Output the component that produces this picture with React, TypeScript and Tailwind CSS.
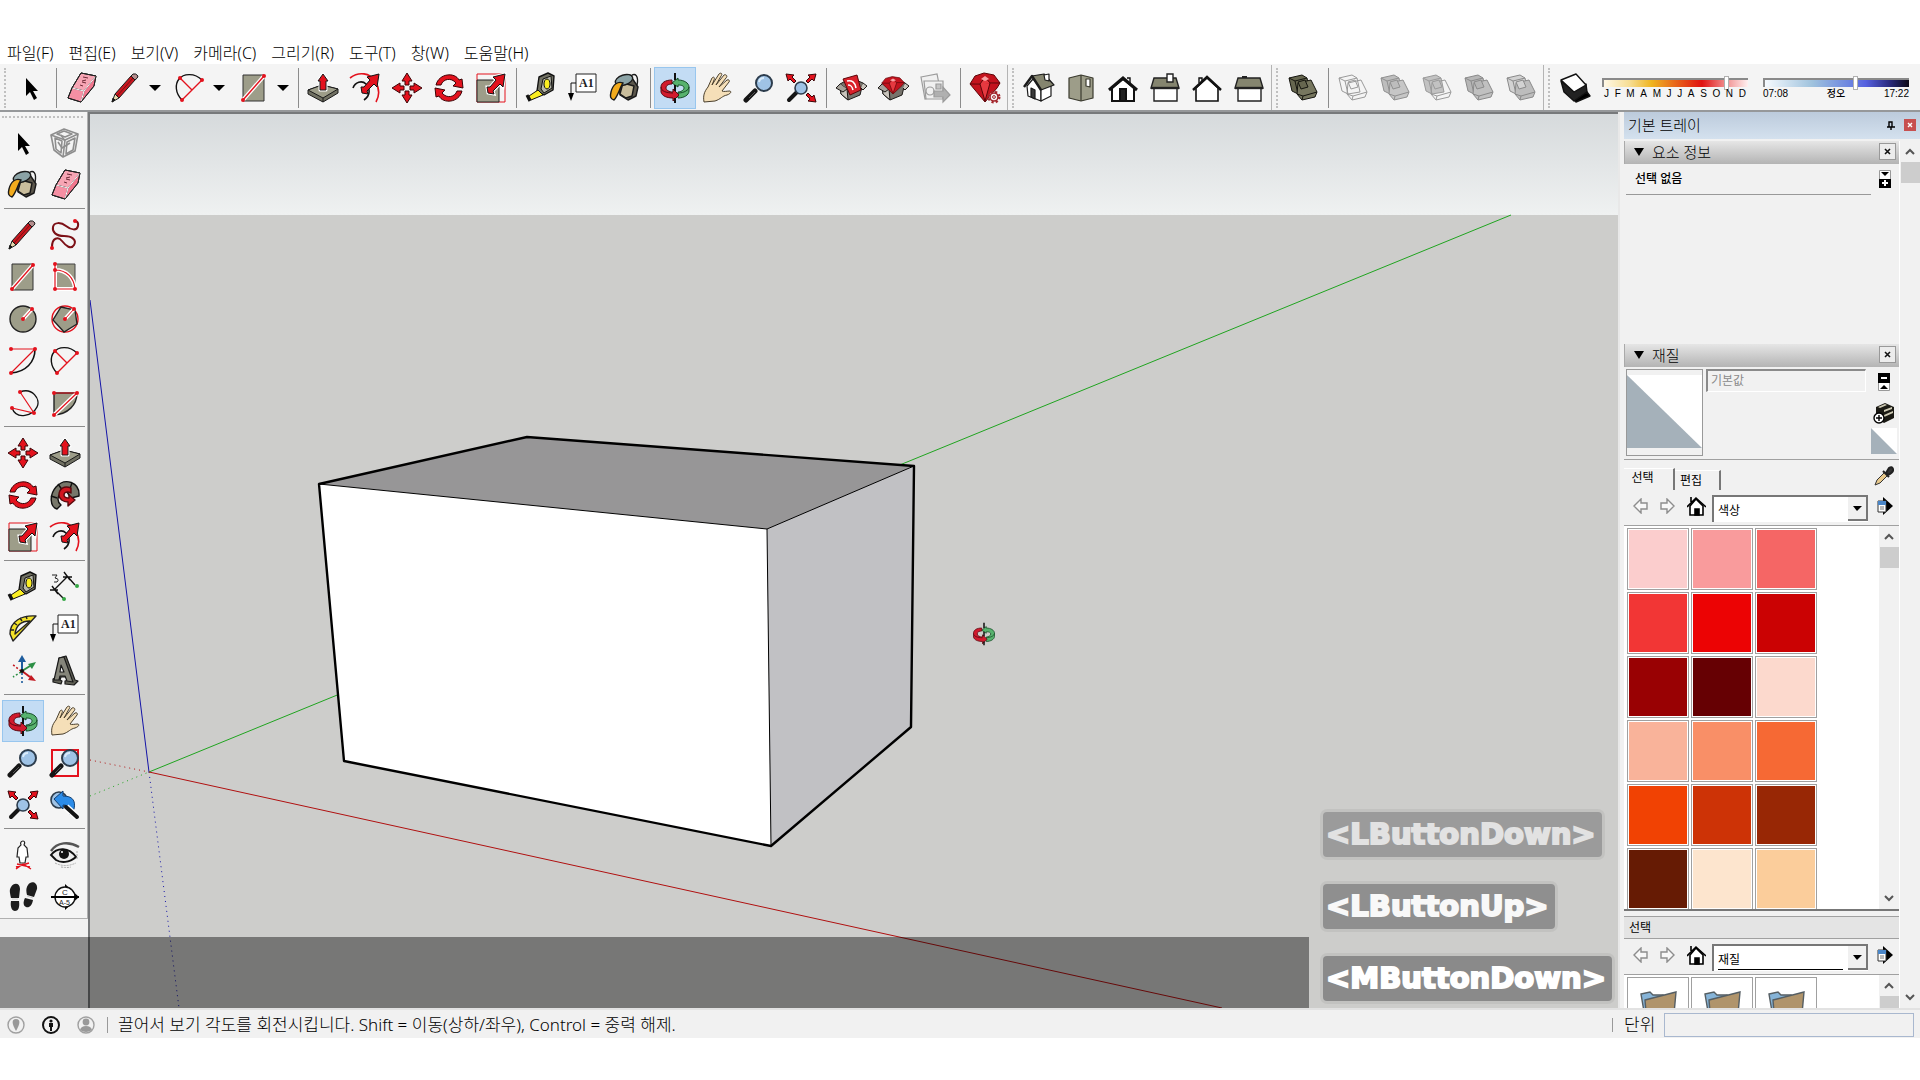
import type { ReactNode } from 'react';
import clsx from 'clsx';

const RED = '#e3121d';
const CLAY = '#9d9d89';

// Small shapes reused by several tool icons
const bigArrow = (
  <path d="M30 2l-2 13-3-3-7 7 1 3-6-1-1-6 3 0 6-7-3-3z" fill={RED} stroke="#111" strokeWidth="1" />
);

const lens = (
  <>
    <path d="M3 28l9-9" stroke="#151515" strokeWidth="5" strokeLinecap="round" />
    <path d="M6 26l6-6" stroke="#555" strokeWidth="1" />
    <circle cx="21" cy="11" r="8" fill="#9fc3e6" stroke="#2c3c4c" strokeWidth="2" />
    <path d="M16 10a5 5 0 0 1 5-4" stroke="#d9ebfa" strokeWidth="2" fill="none" />
  </>
);

const dots = (points: number[][]) =>
  points.map(([x, y]) => <circle key={`${x}-${y}`} cx={x} cy={y} r="2" fill={RED} />);

const boxes = (front: string, back: string, stroke: string) => (
  <g stroke={stroke} strokeWidth="1" strokeLinejoin="round">
    <path d="M2 6l13-3 5 3 3 14-12 2-6-3z" fill={back} />
    <path d="M2 6l6 3 12-3M8 9l3 13" fill="none" />
    <path d="M11 11l13-3 6 12-2 5-13 3-5-6z" fill={front} />
    <path d="M10 22l6 2 14-4M16 24l-1 4" fill="none" />
    <path d="M11 10l7-2 3 7-7 2z" fill={back} />
  </g>
);

const gem = (
  <g stroke="#5d0508" strokeWidth="1" strokeLinejoin="round">
    <path d="M1 12l5-8 9-3 10 2 6 8-3 5-12 14z" fill="#c4131e" />
    <path d="M1 12l10 0 5-7 5 6 10 0M11 12l5 17 5-18" fill="#e63940" />
    <path d="M12 7l4-3 4 3-4 2z" fill="#f7a3a5" stroke="none" />
  </g>
);

const carton = (
  <g stroke="#1c1917" strokeWidth="1" strokeLinejoin="round">
    <path d="M5 12l11-6 12 5-3 12-12 5-7-6z" fill="#77736c" />
    <path d="M5 12l7 5 1 11-7-6zM28 11l4 3-4 4-2-2" fill="#c9c5bd" />
    <path d="M5 12l-4 4 7 4 4-3" fill="#a5a199" />
  </g>
);

const icons: Record<string, ReactNode> = {
  select: <path d="M11 6v18l4-4 4 8 3-2-4-7h5z" fill="#000" />,
  eraser: (
    <g stroke="#222" strokeWidth="1" strokeLinejoin="round">
      <path d="M16 1l15 3-2 10-13 16-13-4 4-10z" fill="#f0768d" />
      <path d="M7 16l12 3L31 4 16 1z" fill="#f7a5b4" />
      <path d="M7 16l12 3-3 11-13-4z" fill="#f58fa3" />
      <path d="M7 16l12 3L31 4M19 19l-3 11" fill="none" stroke="#fff" />
      <path d="M16 1l15 3-2 10-13 16-13-4 4-10z" fill="none" />
      <path d="M15 13l3 1m-1-4l4 1m-4-2l4-1m-3-3l5 1" stroke="#6d2936" fill="none" />
    </g>
  ),
  pencil: (
    <g stroke="#1a1a1a" strokeWidth="1" strokeLinejoin="round">
      <path d="M2 30l3-8 4 4z" fill="#e8d9ad" />
      <path d="M5 22L21 4l4 4-16 18z" fill="#c8171f" />
      <path d="M21 4l2-2q3-1 5 2 0 2-3 4z" fill="#b58e8e" />
      <path d="M7 24L23 6" stroke="#7c0d12" />
      <path d="M2 30l1-4 2 2z" fill="#111" />
    </g>
  ),
  arc: (
    <>
      <path d="M8 28C1 21 1 12 5 7s15-7 23 1" fill="none" stroke="#111" strokeWidth="1.4" />
      <path d="M8 28L28 8M6 6l12 12" stroke={RED} strokeWidth="1.4" />
      {dots([[8, 28], [28, 8], [6, 6]])}
    </>
  ),
  rect: (
    <>
      <path d="M5 3h21v26H5z" fill={CLAY} stroke="#333" />
      <path d="M5 28L26 4" stroke="#fff" strokeWidth="4" />
      <path d="M5 28L26 4" stroke={RED} strokeWidth="1.4" />
      {dots([[5, 28], [26, 4]])}
    </>
  ),
  push: (
    <g stroke="#1a1a1a" strokeWidth="1" strokeLinejoin="round">
      <path d="M1 18l14-5 16 4v4L16 30 1 22z" fill="#707062" />
      <path d="M1 18l14-5 16 4-15 9z" fill={CLAY} />
      <path d="M16 26v4" />
      <path d="M16 2l5 7h-2v9h-6V9h-2z" fill={RED} stroke="#fff" strokeWidth="3" />
      <path d="M16 2l5 7h-2v9h-6V9h-2z" fill={RED} />
    </g>
  ),
  offset: (
    <>
      <path d="M1 6C10-1 21 1 26 9s5 14 1 21" fill="none" stroke={RED} strokeWidth="1.6" />
      <path d="M4 16c2-6 9-8 13-4s5 11-2 16" fill="none" stroke="#111" strokeWidth="1.6" />
      {bigArrow}
    </>
  ),
  move: (
    <g fill={RED} stroke="#3a0507" strokeWidth="1">
      <path d="M16 1l5 8h-3v4h-4V9h-3z" />
      <path d="M16 31l5-8h-3v-4h-4v4h-3z" />
      <path d="M1 16l8-5v3h4v4H9v3z" />
      <path d="M31 16l-8-5v3h-4v4h4v3z" />
    </g>
  ),
  rotate: (
    <g fill={RED} stroke="#3a0507" strokeWidth="1" strokeLinejoin="round">
      <path d="M3 13C6 1 22 0 26 8l3-1 1 9-10-2 3-3C18 5 10 7 8 13z" />
      <path d="M29 19C26 31 10 32 6 24l-3 1-1-9 10 2-3 3c5 6 13 4 15-2z" />
    </g>
  ),
  scale: (
    <>
      <path d="M2 2h28v28H2z" fill="none" stroke={RED} strokeWidth="1" />
      <path d="M2 8h22v22H2z" fill={CLAY} stroke="#222" />
      <path d="M30 2l-2 13-3-3-7 7 1 3-6-1-1-6 3 0 6-7-3-3z" stroke="#fff" strokeWidth="3" />
      {bigArrow}
    </>
  ),
  tape: (
    <g stroke="#111" strokeLinejoin="round">
      <path d="M14 5l9-4 6 3-1 14-9 5-7-4z" fill="#707062" strokeWidth="1.4" />
      <path d="M18 7l8-3 1 12-8 5-3-4z" fill="#b8b8aa" />
      <ellipse cx="22" cy="12" rx="3" ry="5" fill="#fbee21" />
      <path d="M13 18l-9 6 2 4 12-5z" fill="#fbee21" />
      <path d="M2 23l3 6" strokeWidth="3" />
    </g>
  ),
  label: (
    <>
      <path d="M9 2h20v18H9z" fill="#fff" stroke="#222" />
      <path d="M9 11H4v11" fill="none" stroke="#111" />
      <path d="M1 21h6l-3 8z" fill="#000" />
      <text x="12" y="15" fontFamily="Liberation Serif, serif" fontWeight="bold" fontSize="12" fill="#222">A1</text>
    </>
  ),
  paint: (
    <g stroke="#1a1a1a" strokeWidth="1.4" strokeLinejoin="round">
      <path d="M10 8l11-5 8 12-2 9-8 4-8-5z" fill="#5c574c" />
      <path d="M14 11l11 3-2 10-6 2-6-4z" fill="#c9bd9c" />
      <ellipse cx="15" cy="8" rx="9" ry="5" fill="#8ba3a6" transform="rotate(-18 15 8)" />
      <path d="M22 4c4-4 8 0 6 9" fill="none" />
      <path d="M2 20c2-8 7-11 12-9-3 4-5 13-9 17-4-1-4-4-3-8z" fill="#f2ab1d" />
    </g>
  ),
  orbit: (
    <g strokeLinejoin="round">
      <path d="M19 6l-6 5 6 4v-2c4 0 6 1 6 3s-3 4-6 4v6c6 0 11-3 11-7v-4c0-4-5-7-11-7z" fill="#57b26e" stroke="#154d27" />
      <path d="M30 15c0 3-5 6-11 6" stroke="#154d27" fill="none" />
      <path d="M13 8C6 8 2 11 2 15v5c1 4 6 6 12 6v3l6-6-6-6v3c-4 0-7-2-7-4 0-3 3-4 6-4z" fill="#d11a2d" stroke="#5a0a12" />
      <path d="M2 15c0 4 5 6 12 6" stroke="#5a0a12" fill="none" />
      <path d="M16 1v7M16 13v6M16 26v5" stroke="#111" strokeWidth="2" />
    </g>
  ),
  hand: (
    <path
      d="M3 30c-1-6 0-10 4-15l4-9c2-2 3 0 2 2l-2 5 7-11c2-2 4 0 2 2l-5 9 8-10c2-1 4 1 2 3l-7 9 8-7c2-1 3 1 2 2l-7 9c2 1 5 0 8 0 2 1 0 3-3 4-5 1-6 4-12 6z"
      fill="#f5dfb8"
      stroke="#4a3f2c"
      strokeLinejoin="round"
    />
  ),
  zoom: lens,
  zoomWindow: (
    <>
      <path d="M3 3h26v26H3z" fill="none" stroke={RED} strokeWidth="2" />
      {lens}
    </>
  ),
  extents: (
    <>
      <path d="M4 28l8-8" stroke="#151515" strokeWidth="4" strokeLinecap="round" />
      <circle cx="16" cy="16" r="6" fill="#9fc3e6" stroke="#2c3c4c" strokeWidth="1.6" />
      <g fill={RED} stroke="#3a0507">
        <path d="M1 2l8 1-2 2 4 4-2 2-4-4-2 2z" />
        <path d="M31 2l-8 1 2 2-4 4 2 2 4-4 2 2z" />
        <path d="M31 30l-8-1 2-2-4-4 2-2 4 4 2-2z" />
      </g>
    </>
  ),
  warehouse: (
    <>
      {carton}
      <path d="M8 7l14-4 4 15-11 5z" fill="#d9202a" stroke="#5d0508" />
      <path d="M12 9c5-1 8 1 9 7M13 13c3 0 4 1 5 5" stroke="#fff" strokeWidth="1.6" fill="none" />
    </>
  ),
  extension: (
    <>
      {carton}
      <g transform="translate(4 4) scale(.75 .6)">{gem}</g>
    </>
  ),
  layout: (
    <g stroke="#9b9b9b" strokeWidth="1.2" fill="#f0f0f0">
      <path d="M2 5l16-3 4 20-16 5z" />
      <path d="M5 9h19v18H7z" />
      <circle cx="11" cy="19" r="4" />
      <path d="M17 12l5 0v5h-5z" fill="#c4c4c4" />
      <path d="M15 19h9v-4l7 8-7 7v-5h-9z" fill="#b0b0b0" />
    </g>
  ),
  ruby: (
    <>
      {gem}
      <circle cx="25" cy="25" r="5" fill="#f3f3f3" stroke="#a3262c" strokeWidth="3" strokeDasharray="2 2" />
      <circle cx="25" cy="25" r="4" fill="#f3f3f3" stroke="#a3262c" strokeWidth="1.6" />
      <circle cx="25" cy="25" r="1.4" fill="none" stroke="#a3262c" />
    </>
  ),
  houseIso: (
    <g stroke="#1a1a1a" strokeWidth="1.2" strokeLinejoin="round">
      <path d="M4 14l6-7 8 10v12L5 24z" fill="#fff" />
      <path d="M18 17l10-4v11l-10 5z" fill="#fff" />
      <path d="M9 4l12-2 10 11-13 5z" fill="#85856f" />
      <path d="M1 15L9 4l9 14" fill="none" strokeWidth="2.4" />
      <path d="M8 16l4 2v9l-4-2z" fill="#3a3a3a" />
      <path d="M21 3l5-1v7l-4-1z" fill="#fff" />
    </g>
  ),
  houseTop: (
    <g stroke="#3a3a2e" strokeWidth="1.2" strokeLinejoin="round">
      <path d="M4 6l12-3 12 3v20l-12 3-12-3z" fill={CLAY} />
      <path d="M16 3v26" />
      <path d="M21 7h4v8l-4-1z" fill="#fff" />
    </g>
  ),
  houseFront: (
    <g stroke="#111" strokeWidth="2">
      <path d="M5 16v13h22V16L16 7z" fill="#fff" />
      <path d="M2 18L16 6l14 12" fill="none" strokeWidth="3" />
      <path d="M13 17h6v12h-6z" fill="#222" />
      <path d="M20 6h3v5" fill="none" strokeWidth="1.4" />
    </g>
  ),
  houseRight: (
    <g stroke="#222" strokeWidth="1.4">
      <path d="M5 16h23v13H5z" fill="#fff" />
      <path d="M5 6h22l3 10H2z" fill="#85856f" />
      <path d="M2 16h28" strokeWidth="2.4" />
      <path d="M18 2h6v8h-6z" fill="#fff" />
    </g>
  ),
  houseBack: (
    <g stroke="#111" strokeWidth="1.6">
      <path d="M5 16v13h22V16L16 6z" fill="#fff" />
      <path d="M2 18L16 5l14 13" fill="none" strokeWidth="2.4" />
      <path d="M8 11V6h3v3" fill="none" strokeWidth="1.4" />
    </g>
  ),
  houseLeft: (
    <g stroke="#222" strokeWidth="1.4">
      <path d="M5 16h23v13H5z" fill="#fff" />
      <path d="M5 6h22l3 10H2z" fill="#85856f" />
      <path d="M2 16h28" strokeWidth="2.4" />
      <path d="M9 5h5" strokeWidth="2" />
    </g>
  ),
  shell: boxes('#77775f', '#66664f', '#15150f'),
  intersect: boxes('none', 'none', '#9a9a9a'),
  union: boxes('#c6c6c6', '#bdbdbd', '#909090'),
  subtract: boxes('none', '#c2c2c2', '#9a9a9a'),
  trim: boxes('#c0c0c0', '#b6b6b6', '#8a8a8a'),
  split: boxes('#bdbdbd', '#d2d2d2', '#8a8a8a'),
  shadow: (
    <g stroke="#111" strokeWidth="1.4" strokeLinejoin="round">
      <path d="M14 27l14-7 3 4-14 6z" fill="#000" />
      <path d="M2 9l3 11 10 9 13-9-1-8-12 7z" fill="#222" />
      <path d="M2 8l15-6 10 11-12 7z" fill="#fff" />
    </g>
  ),
  component: (
    <g fill="none" stroke="#8e8e8e" strokeWidth="1.6" strokeLinejoin="round">
      <path d="M2 8l13-6 14 5-3 17-12 6-9-7z" />
      <path d="M2 8l14 5 13-6M16 13l-2 17" />
      <path d="M6 11l7 3-1 12-5-4zM18 15l8-4-2 12-7 4zM8 7l7-3 8 3-7 3z" />
      <path d="M9 15l4 6 8-5M12 8l4 6" />
    </g>
  ),
  freehand: (
    <>
      <path d="M3 28c0-9 6-11 10-6s9 9 12 4-2-9-10-9S3 13 4 8s8-5 13-1 11 5 12 0-3-5-3-5" fill="none" stroke="#7c1016" strokeWidth="2" />
      {dots([[3, 29], [26, 2]])}
    </>
  ),
  rotRect: (
    <>
      <path d="M6 3h20v25H6z" fill={CLAY} stroke="#444" />
      <path d="M6 9c12 0 19 8 20 19H6V3" fill="none" stroke="#fff" strokeWidth="4" />
      <path d="M6 9c12 0 19 8 20 19H6V3" fill="none" stroke={RED} strokeWidth="1.2" />
      {dots([[6, 3], [6, 9], [6, 28], [26, 28]])}
    </>
  ),
  circle: (
    <>
      <circle cx="16" cy="16" r="13" fill={CLAY} stroke="#222" strokeWidth="1.4" />
      <path d="M16 16L25 6" stroke="#fff" strokeWidth="4" />
      <path d="M16 16L25 6" stroke={RED} />
      {dots([[16, 16], [25, 6]])}
    </>
  ),
  polygon: (
    <>
      <circle cx="16" cy="16" r="13" fill="none" stroke={RED} strokeWidth="1.4" />
      <path d="M12 4L26 7l2 14-13 8L4 17z" fill={CLAY} stroke="#222" strokeWidth="1.4" />
      <path d="M16 16L25 6" stroke="#fff" strokeWidth="4" />
      <path d="M16 16L25 6" stroke={RED} />
      {dots([[16, 16], [25, 6]])}
    </>
  ),
  arcCenter: (
    <>
      <path d="M28 4c0 13-9 23-24 24" fill="none" stroke="#111" strokeWidth="1.6" />
      <path d="M4 4h24L4 28" fill="none" stroke={RED} strokeWidth="1.2" />
      {dots([[4, 4], [28, 4], [4, 28]])}
    </>
  ),
  arc3: (
    <>
      <path d="M13 5c12-5 21 7 17 15S10 34 5 21" fill="none" stroke="#111" strokeWidth="1.4" />
      <path d="M13 5l14 21L5 21" fill="none" stroke={RED} strokeWidth="1.2" />
      {dots([[13, 5], [27, 26], [5, 21]])}
    </>
  ),
  pie: (
    <>
      <path d="M5 6h23c0 12-9 21-23 22z" fill={CLAY} stroke="#222" strokeWidth="1.4" />
      <path d="M28 6L5 28" stroke="#fff" strokeWidth="4" />
      <path d="M5 6h23L5 28" fill="none" stroke={RED} strokeWidth="1.2" />
      {dots([[5, 6], [28, 6], [5, 28]])}
    </>
  ),
  follow: (
    <g stroke="#111" strokeWidth="1.4" strokeLinejoin="round">
      <path d="M30 17C31 3 16-2 7 8 0 16 1 28 8 30l4-4c-6-5-2-15 6-13l4 6z" fill="#77776a" />
      <path d="M2 17l6 2M9 5l5 7M23 4l-3 8" />
      <path d="M22 9c-7-3-12 1-12 7 0 4 4 7 9 7v4l7-6-6-5v3c-3 0-5-1-5-3 0-3 4-4 7-2z" fill="#d2151f" stroke="#58090d" />
    </g>
  ),
  dimension: (
    <>
      <path d="M5 19L19 5M3 15l6 8M15 1l6 8M1 19h8M14 6h9M6 19l8 8M19 6l7 8" stroke="#111" strokeWidth="1.4" />
      <path d="M3 4l5 0-2 3q5 1 2 4l-3 0" fill="none" stroke="#222" />
      <circle cx="15" cy="28" r="2" fill="#35a745" />
      <circle cx="28" cy="15" r="2" fill="#35a745" />
    </>
  ),
  protractor: (
    <g stroke="#222" strokeWidth="1.4" strokeLinejoin="round">
      <path d="M29 3C15 2 3 8 3 21l3 7z" fill="#f3e228" />
      <path d="M23 8C13 8 9 13 8 21z" fill="#f5f5f5" />
      <path d="M13 5l2 3M7 10l3 2M4 17l3 0M19 3l1 3" />
    </g>
  ),
  axes: (
    <>
      <path d="M15 16V5" stroke="#1d5c9d" strokeWidth="2" />
      <path d="M15 0l4 7h-8z" fill="#1d5c9d" />
      <path d="M15 16l8-5" stroke="#2c8f45" strokeWidth="2" />
      <path d="M29 7l-4 7-4-5z" fill="#2c8f45" />
      <path d="M15 16l8 6" stroke="#c31a22" strokeWidth="2" />
      <path d="M29 26l-8-1 3-5z" fill="#c31a22" />
      <path d="M14 16l-9-7" stroke="#c31a22" strokeWidth="1.6" strokeDasharray="2 2" />
      <path d="M14 17l-8 5" stroke="#2c8f45" strokeWidth="1.6" strokeDasharray="2 2" />
      <path d="M15 18v11" stroke="#1d5c9d" strokeWidth="1.6" strokeDasharray="2 2" />
      <circle cx="15" cy="16" r="2" fill="#111" />
    </>
  ),
  text3d: (
    <g stroke="#1a1a1a" strokeWidth="1.2" strokeLinejoin="round">
      <path d="M10 3l7-2 9 24 3 1-4 4-9-1v-3l3-1-1-3h-6l-1 3 2 1-1 3-8-2v-3l4-2z" fill="#5f5f54" />
      <path d="M10 3l5-1 9 25-6-1-2-5h-5l-1 4-5 0z" fill="#85857a" />
      <path d="M12 10l3 7h-4z" fill="#f3f3f3" />
    </g>
  ),
  previous: (
    <>
      <circle cx="10" cy="11" r="8" fill="#9fc3e6" stroke="#2c3c4c" strokeWidth="1.6" />
      <path d="M5 10l9-8v5c9 0 13 4 11 13l-4 6c1-7-1-10-7-10v4z" fill="#2c8ce8" stroke="#103d70" />
      <path d="M17 18l11 10" stroke="#fff" strokeWidth="7" />
      <path d="M17 18l11 10" stroke="#151515" strokeWidth="4" strokeLinecap="round" />
    </>
  ),
  camera: (
    <>
      <path d="M16 2c2 0 2 2 1 4l3 3 1 9h-2l-1 6h-5l-1-6h-2l1-9 3-3c-1-2 0-4 2-4z" fill="#fff" stroke="#222" strokeWidth="1.2" />
      <path d="M9 30l7-5 8 5M10 25l13 3M22 24L9 28" stroke={RED} strokeWidth="1.4" fill="none" />
    </>
  ),
  look: (
    <>
      <path d="M2 12C8 3 20 2 30 8" fill="none" stroke="#555" strokeWidth="2.4" />
      <path d="M2 16C8 8 20 8 27 18c-7 6-15 6-20 3z" fill="#eee" stroke="#111" strokeWidth="2" />
      <circle cx="15" cy="15" r="5" fill="#111" />
      <circle cx="13" cy="13" r="1" fill="#fff" />
      <path d="M6 24q10 5 21 0M12 28q7 1 10 0M28 12v9" fill="none" stroke="#aaa" strokeDasharray="2 1" />
    </>
  ),
  walk: (
    <g fill="#1d1d1d">
      <path d="M4 6c3-5 9-4 9 2l-1 9H4C3 12 2 9 4 6zM4 20h8c1 7-1 10-4 10s-5-4-4-10z" />
      <path d="M21 4c3-5 10-3 9 4l-3 8-7-2c-1-4-1-7 1-10zM18 17l8 2c-1 6-4 8-7 7s-3-5-1-9z" />
      <path d="M5 18h6M20 15l6 2" stroke="#ccc" />
    </g>
  ),
  section: (
    <>
      <path d="M16 3l14 13-14 13z" fill="#000" />
      <circle cx="16" cy="16" r="10" fill="#fff" stroke="#111" strokeWidth="1.4" />
      <path d="M2 16h28" stroke="#000" strokeWidth="2" />
      <text x="13" y="14" fontFamily="Liberation Sans" fontSize="8" fill="#222">C</text>
      <text x="10" y="24" fontFamily="Liberation Sans" fontSize="7" fill="#222">A-5</text>
    </>
  ),
};

function Icon({ name }: { name: string }) {
  return (
    <svg width="32" height="32" viewBox="0 0 32 32" fill="none" aria-hidden="true">
      {icons[name]}
    </svg>
  );
}

function Tool({ name, active = false }: { name: string; active?: boolean }) {
  return (
    <button
      aria-label={name}
      className={clsx(
        'flex h-[42px] w-[42px] shrink-0 items-center justify-center border',
        active ? 'border-[#98c6ee] bg-[#c3dcf4]' : 'border-transparent'
      )}
    >
      <Icon name={name} />
    </button>
  );
}

function DropTool({ name }: { name: string }) {
  return (
    <div className="flex w-16 shrink-0 items-center pl-[3px]">
      <Tool name={name} />
      <button aria-label={`${name} menu`} className="flex w-4 justify-center">
        <svg width="12" height="6" viewBox="0 0 12 6"><path d="M0 0h12L6 6z" /></svg>
      </button>
    </div>
  );
}

function Sep() {
  return (
    <div className="flex w-2 shrink-0 justify-center">
      <div className="h-10 w-px bg-[#8c8c8c]" />
    </div>
  );
}

function Group({ children, last = false }: { children: ReactNode; last?: boolean }) {
  return (
    <div className={clsx('flex h-full items-center', last ? 'flex-1' : 'border-r border-[#b4b4b4] pr-px')}>
      <div className="mx-1 h-10 shrink-0 border-l-2 border-dotted border-[#c0c0c0]" />
      {children}
    </div>
  );
}

const rangeClass =
  'block h-[9px] w-full appearance-none border-t-2 border-l-2 border-[#8a8a8a] ' +
  '[&::-webkit-slider-thumb]:appearance-none [&::-webkit-slider-thumb]:h-[14px] [&::-webkit-slider-thumb]:w-[5px] ' +
  '[&::-webkit-slider-thumb]:border [&::-webkit-slider-thumb]:border-[#b0b0b0] [&::-webkit-slider-thumb]:bg-white';

function ShadowSliders() {
  return (
    <div className="ml-[6px] flex flex-1 gap-[15px] pt-[2px] pr-[11px] font-['Liberation_Sans','Noto_Sans_CJK_KR',sans-serif] text-[10px] leading-3 font-medium">
      <div className="flex-1">
        <input
          type="range"
          aria-label="날짜"
          min="0"
          max="100"
          defaultValue="86"
          className={clsx(rangeClass, 'bg-[linear-gradient(90deg,#fff8e6,#f6dd92_18%,#efb420_33%,#e8641a_50%,#e01212_68%,#f08a8a_84%,#fff0f0)]')}
        />
        <div className="mt-px flex justify-between px-[2px]">
          {'JFMAMJJASOND'.split('').map((m, i) => (
            <span key={i}>{m}</span>
          ))}
        </div>
      </div>
      <div className="flex-1">
        <input
          type="range"
          aria-label="시간"
          min="0"
          max="100"
          defaultValue="63"
          className={clsx(rangeClass, 'bg-[linear-gradient(90deg,#f6fafe,#9fc2dd_33%,#6d86e0_58%,#5560e0_70%,#2c2c80_86%,#0c0a18)]')}
        />
        <div className="mt-px flex justify-between">
          <span>07:08</span>
          <span>정오</span>
          <span>17:22</span>
        </div>
      </div>
    </div>
  );
}

const palette = [
  ['select', 'component', 'paint', 'eraser'],
  ['pencil', 'freehand', 'rect', 'rotRect', 'circle', 'polygon', 'arcCenter', 'arc', 'arc3', 'pie'],
  ['move', 'push', 'rotate', 'follow', 'scale', 'offset'],
  ['tape', 'dimension', 'protractor', 'label', 'axes', 'text3d'],
  ['orbit', 'hand', 'zoom', 'zoomWindow', 'extents', 'previous'],
  ['camera', 'look', 'walk', 'section'],
];

function Palette() {
  return (
    <aside className="w-[88px] shrink-0 bg-[#f1f1f1]">
      <div className="border-r border-b border-[#b0b0b0] bg-[#f4f4f4] pt-1 pl-[2px]">
        <div className="mr-1 mb-1 border-t-2 border-dotted border-[#c0c0c0]" />
        {palette.map((tools, i) => (
          <div key={i}>
            {i > 0 && (
              <div className="flex h-2 items-start px-[2px] pt-[2px]">
                <div className="h-px flex-1 bg-[#8c8c8c]" />
              </div>
            )}
            <div className="grid grid-cols-[42px_42px]">
              {tools.map((t) => (
                <Tool key={t} name={t} active={t === 'orbit'} />
              ))}
            </div>
          </div>
        ))}
      </div>
    </aside>
  );
}

const keys = [
  { label: '<LButtonDown>', style: 'bg-[#9b9b9b] text-[#e2e2e2]' },
  { label: '<LButtonUp>', style: 'bg-[#8f8f8f] text-[#f8f8f8]' },
  { label: '<MButtonDown>', style: 'bg-[#8a8a8a] text-white' },
];

function Viewport() {
  return (
    <main className="relative min-w-0 flex-1 overflow-hidden border-t-2 border-l-2 border-[#77797b] bg-[#cdcdcb]">
      <div className="h-[101px] bg-linear-to-b from-[#d6dadc] to-[#eff1f1]" />
      <svg
        className="absolute inset-0 h-full w-full"
        viewBox="90 114 1528 894"
        preserveAspectRatio="xMinYMin slice"
        fill="none"
      >
        <path d="M90 300L149 772" stroke="#1414a8" />
        <path d="M149 772L179 1008" stroke="#1414a8" strokeDasharray="1 4" />
        <path d="M149 772L1511 215" stroke="#1fa41f" />
        <path d="M90 796L149 772" stroke="#1fa41f" strokeDasharray="1 4" />
        <path d="M149 772L1222 1008" stroke="#b01010" />
        <path d="M90 760L149 772" stroke="#b01010" strokeDasharray="1 4" />
        <path d="M319 484L527 437 914 466 767 529z" fill="#979697" />
        <path d="M319 484L767 529 771 846 344 761z" fill="#fff" />
        <path d="M767 529L914 466 911 727 771 846z" fill="#c1c1c4" />
        <path d="M319 484L767 529 914 466M767 529L771 846" stroke="#000" />
        <path d="M319 484L527 437 914 466 911 727 771 846 344 761z" stroke="#000" strokeWidth="2.4" strokeLinejoin="round" />
        <g transform="translate(972 622) scale(.75)">{icons.orbit}</g>
      </svg>
      <div className="absolute right-[6px] bottom-[7px] flex flex-col items-start gap-[27px] font-['DejaVu_Sans',sans-serif] text-[29px] leading-[45px] font-bold">
        {keys.map((k) => (
          <kbd
            key={k.label}
            className={clsx('rounded pr-[6px] pl-[3px] font-[inherit] shadow-[0_0_0_3px_rgba(0,0,0,0.05)] [-webkit-text-stroke:2px]', k.style)}
          >
            {k.label}
          </kbd>
        ))}
      </div>
    </main>
  );
}

function Chevron({ down = false }: { down?: boolean }) {
  return (
    <svg width="10" height="7" viewBox="0 0 10 7" fill="none" stroke="#555" strokeWidth="2" className={clsx(down && 'rotate-180')}>
      <path d="M1 6l4-4 4 4" />
    </svg>
  );
}

function ScrollBar({ end = true }: { end?: boolean }) {
  return (
    <div className="flex w-5 shrink-0 flex-col items-center bg-[#f1f1f1]">
      <div className="flex h-[21px] shrink-0 items-center"><Chevron /></div>
      <div className="h-[21px] w-[19px] bg-[#cdcdcd]" />
      {end && <div className="mt-auto flex h-[21px] shrink-0 items-center"><Chevron down /></div>}
    </div>
  );
}

function SectionHeader({ title }: { title: string }) {
  return (
    <div className="flex h-[23px] shrink-0 items-center border-l border-[#aaa] bg-linear-to-b from-[#e6e6e6] to-[#b4b4b4] pr-[3px] pb-[2px] pl-[9px]">
      <svg width="10" height="8" viewBox="0 0 10 8"><path d="M0 0h10L5 8z" /></svg>
      <h2 className="ml-2 flex-1 text-[15px] leading-5 font-light">{title}</h2>
      <button aria-label="닫기" className="flex h-[17px] w-[17px] items-center justify-center border border-[#999] bg-[#ececec]">
        <svg width="7" height="7" viewBox="0 0 7 7" stroke="#111" strokeWidth="1.6"><path d="M1 1l5 5M6 1L1 6" /></svg>
      </button>
    </div>
  );
}

function NavRow({ value, underline = false }: { value: string; underline?: boolean }) {
  return (
    <div className="flex h-9 shrink-0 items-center border-b border-[#a0a0a0] pr-[5px] pb-[3px] pl-[9px]">
      <button aria-label="뒤로" className="mr-3">
        <svg width="15" height="16" viewBox="0 0 15 16" fill="#f8f8f8" stroke="#8d8d8d" strokeWidth="1.4"><path d="M1 8l7-7v4h6v6H8v4z" /></svg>
      </button>
      <button aria-label="앞으로" className="mr-3">
        <svg width="15" height="16" viewBox="0 0 15 16" fill="#f8f8f8" stroke="#8d8d8d" strokeWidth="1.4"><path d="M14 8L7 1v4H1v6h6v4z" /></svg>
      </button>
      <button aria-label="홈" className="mr-[6px]">
        <svg width="19" height="20" viewBox="0 0 19 20" fill="#fff" stroke="#000" strokeWidth="1.6">
          <path d="M3 10v9h13v-9L9 3z" />
          <path d="M0 11L9 2l10 9M4 6V1" fill="none" />
          <path d="M8 13h4v6H8z" fill="#000" />
        </svg>
      </button>
      <div className="relative h-[27px] flex-1 self-end border-t-2 border-l-2 border-[#777] bg-white">
        <select aria-label="재질 목록" className="h-full w-full appearance-none pl-1 text-xs">
          <option>{value}</option>
        </select>
        {underline && <div className="pointer-events-none absolute bottom-px left-1 h-px w-[125px] bg-black" />}
        <div className="pointer-events-none absolute top-0 right-0 flex h-6 w-5 items-center justify-center border-r-2 border-b-2 border-[#777] bg-[#f0f0f0]">
          <svg width="9" height="5" viewBox="0 0 9 5"><path d="M0 0h9L4 5z" /></svg>
        </div>
      </div>
      <button aria-label="세부 정보" className="ml-[9px]">
        <svg width="17" height="18" viewBox="0 0 17 18">
          <path d="M6 0l10 9-10 9z" />
          <path d="M1 4h8v11H1z" fill="#fff" stroke="#333" />
          <path d="M1 4h8v4H1z" fill="#4a86c8" />
          <path d="M3 10h4M3 12h4" stroke="#777" />
        </svg>
      </button>
    </div>
  );
}

const swatches = [
  'bg-[#fbcdcd]', 'bg-[#f99b9c]', 'bg-[#f56665]',
  'bg-[#f23635]', 'bg-[#ec0304]', 'bg-[#cb0203]',
  'bg-[#990103]', 'bg-[#660003]', 'bg-[#fcd9cd]',
  'bg-[#f9b39a]', 'bg-[#f98f67]', 'bg-[#f66934]',
  'bg-[#f14203]', 'bg-[#cd3306]', 'bg-[#982705]',
  'bg-[#661b04]', 'bg-[#fde5ce]', 'bg-[#fbcd9b]',
];

function Folder() {
  return (
    <svg width="40" height="46" viewBox="0 0 40 46" stroke="#555e63" strokeWidth="1.4" className="ml-1">
      <path d="M1 4l9-2 3 3 10 0-6 40H8z" fill="#86b4d8" />
      <path d="M5 10L36 2l-4 44H8z" fill="#b0946b" />
    </svg>
  );
}

function Tray() {
  return (
    <aside className="flex w-[302px] shrink-0 flex-col border-l-2 border-[#e8e8e8] bg-[#f1f1f1] pl-1">
      <div className="flex h-[27px] shrink-0 items-center bg-linear-to-b from-[#bccbdc] to-[#d4e1ee] pr-1 pb-px pl-1">
        <h1 className="flex-1 text-[15px] leading-5 font-light">기본 트레이</h1>
        <button aria-label="고정" className="mr-[9px]">
          <svg width="8" height="9" viewBox="0 0 8 9" fill="none" stroke="#000"><path d="M2 1h3v5H2zM5 1v5M0 6h8M4 6v3" strokeWidth="1.4" /></svg>
        </button>
        <button aria-label="트레이 닫기" className="flex h-3 w-3 items-center justify-center bg-[#c75050]">
          <svg width="6" height="6" viewBox="0 0 6 6" stroke="#fff" strokeWidth="1.4"><path d="M1 1l4 4M5 1L1 5" /></svg>
        </button>
      </div>

      <div className="flex min-h-0 flex-1 pt-[2px]">
        <div className="flex min-w-0 flex-1 flex-col">
          <SectionHeader title="요소 정보" />
          <div className="flex h-[180px] shrink-0 items-start pl-[2px]">
            <p className="mr-2 h-[31px] flex-1 border-b border-[#999] pt-[6px] pl-[9px] text-xs leading-[18px] font-medium">선택 없음</p>
            <button aria-label="세부 정보 표시" className="mt-[6px] mr-2">
              <svg width="12" height="18" viewBox="0 0 12 18">
                <path d="M.5.5h11v17H.5z" fill="#fff" stroke="#999" />
                <path d="M2 2h8L6 6zM0 9h12v9H0z" />
                <path d="M3 13h6M6 10v6" stroke="#fff" strokeWidth="2" />
              </svg>
            </button>
          </div>

          <SectionHeader title="재질" />
          <div className="flex h-[93px] shrink-0 items-start border-b border-[#a0a0a0] pt-[2px] pr-[2px] pl-[2px]">
            <svg width="77" height="87" viewBox="0 0 77 87" className="shrink-0 border border-[#999]">
              <path d="M0 5h77v75H0z" fill="#fff" />
              <path d="M0 5l77 75H0z" fill="#a5b1ba" />
            </svg>
            <input
              aria-label="재질 이름"
              defaultValue="기본값"
              className="ml-[3px] h-[23px] w-0 flex-1 border-t-2 border-r border-b border-l-2 border-t-[#8a8a8a] border-r-white border-b-white border-l-[#8a8a8a] bg-[#f1f1f1] pb-[2px] pl-[3px] text-xs text-[#8a8a8a]"
            />
            <div className="ml-1 flex w-[27px] flex-col items-center pt-1">
              <svg width="12" height="18" viewBox="0 0 12 18">
                <path d="M.5.5h11v17H.5z" fill="#fff" stroke="#999" />
                <path d="M0 0h12v10H0zM2 16h8l-4-4z" />
                <path d="M3 5h6" stroke="#fff" strokeWidth="2" />
              </svg>
              <svg width="22" height="22" viewBox="0 0 22 22" className="mt-[11px]">
                <path d="M3 5l9-4 9 4v11l-10 5-8-5z" fill="#1b1a14" />
                <path d="M5 5l7-3 2 1-7 3zM11 8l8-3v2l-8 3zM11 13l9-4v2l-9 4z" fill="#cfcbb5" />
                <circle cx="6" cy="16" r="5" fill="#fff" stroke="#000" strokeWidth="1.4" />
                <path d="M3 16h6M6 13v6" stroke="#000" strokeWidth="1.4" />
              </svg>
              <svg width="26" height="26" viewBox="0 0 26 26" className="mt-1">
                <path d="M0 0h26v26H0z" fill="#fff" />
                <path d="M0 0l26 26H0z" fill="#a5b1ba" />
              </svg>
            </div>
          </div>

          <div className="flex h-[30px] shrink-0 items-end pr-[5px] text-xs leading-4">
            <button className="h-[22px] w-[51px] border-t border-r-2 border-t-white border-r-[#777] pr-3 pb-1">선택</button>
            <button className="h-5 w-[46px] border-t border-r-2 border-t-white border-r-[#777] pr-3">편집</button>
            <button aria-label="스포이트" className="mb-1 ml-auto">
              <svg width="20" height="20" viewBox="0 0 20 20">
                <path d="M1 19l2-5 8-8 3 3-8 8z" fill="#e8c98c" stroke="#333" />
                <path d="M9 5l6 6M12 7l3-5q3-2 4 1t-5 6z" fill="#333" stroke="#222" strokeWidth="2" />
              </svg>
            </button>
          </div>
          <NavRow value="색상" />

          <div className="flex min-h-0 flex-1 bg-white">
            <div className="grid flex-1 grid-cols-[62px_62px_62px] content-start gap-[2px] overflow-hidden pt-[2px] pl-[3px]">
              {swatches.map((color) => (
                <button key={color} aria-label="색상 견본" className="h-[62px] border border-[#a0a0a0] p-px">
                  <div className={clsx('h-full w-full', color)} />
                </button>
              ))}
            </div>
            <ScrollBar />
          </div>

          <div className="h-2 shrink-0 border-t-2 border-b border-t-[#777] border-b-[#a0a0a0]" />
          <div className="h-[22px] shrink-0 border-b border-[#a0a0a0] bg-[#e4e4e4] pl-[5px] text-xs leading-[21px]">선택</div>
          <NavRow value="재질" underline />
          <div className="flex h-[33px] shrink-0 overflow-hidden bg-white">
            <div className="grid flex-1 grid-cols-[62px_62px_62px] gap-[2px] pt-[2px] pl-[3px]">
              {[0, 1, 2].map((i) => (
                <button key={i} aria-label="폴더" className="flex h-[62px] justify-center border border-[#a0a0a0] pt-3">
                  <Folder />
                </button>
              ))}
            </div>
            <ScrollBar end={false} />
          </div>
        </div>
        <div className="flex border-l border-white">
          <ScrollBar />
        </div>
      </div>
    </aside>
  );
}

function StatusBar() {
  return (
    <footer className="flex h-[28px] shrink-0 items-center bg-[#f1f1f1] pt-px pr-[6px] pl-[7px]">
      <svg width="88" height="18" viewBox="0 0 88 18" fill="none">
        <circle cx="9" cy="9" r="8" stroke="#a0a0a0" strokeWidth="1.4" />
        <path d="M9 3c5 0 4 5 0 12-4-7-5-12 0-12z" fill="#999" />
        <circle cx="44" cy="9" r="8" stroke="#111" strokeWidth="2" />
        <circle cx="44" cy="5" r="1.6" fill="#111" />
        <path d="M42 7h4v4h-1v4h-2v-4h-1z" fill="#111" />
        <circle cx="79" cy="9" r="8" stroke="#a0a0a0" strokeWidth="1.4" />
        <circle cx="79" cy="6" r="3.4" fill="#999" />
        <path d="M73 14q1-4 6-4t6 4q-6 4-12 0z" fill="#999" />
      </svg>
      <div className="mr-[10px] ml-3 h-4 w-px bg-[#999]" />
      <p className="flex-1 text-[17px] leading-5 font-light">
        끌어서 보기 각도를 회전시킵니다. Shift = 이동(상하/좌우), Control = 중력 해제.
      </p>
      <div className="mr-[11px] h-[14px] w-px bg-[#999]" />
      <label htmlFor="measure" className="w-10 text-[17px] leading-5 font-light">단위</label>
      <input id="measure" className="h-6 w-[250px] border border-[#a9b8cf] bg-[#f1f1f1] px-1 text-sm" />
    </footer>
  );
}

const menus = ['파일(F)', '편집(E)', '보기(V)', '카메라(C)', '그리기(R)', '도구(T)', '창(W)', '도움말(H)'];

export default function App() {
  return (
    <div className="flex h-screen flex-col bg-white pt-[42px] pb-[42px] font-['Noto_Sans','Noto_Sans_CJK_KR',sans-serif] text-black">
      <nav className="flex h-[22px] shrink-0 gap-[15px] pl-[7px] text-base leading-5 font-light">
        {menus.map((m) => (
          <button key={m} className="whitespace-nowrap">{m}</button>
        ))}
      </nav>

      <header className="flex h-12 shrink-0 border-b-2 border-[#96989a] bg-[#f4f4f4] pt-px">
        <Group>
          <Tool name="select" />
          <Sep />
          <Tool name="eraser" />
          <DropTool name="pencil" />
          <DropTool name="arc" />
          <DropTool name="rect" />
          <Sep />
          {['push', 'offset', 'move', 'rotate', 'scale'].map((t) => <Tool key={t} name={t} />)}
          <Sep />
          {['tape', 'label', 'paint'].map((t) => <Tool key={t} name={t} />)}
          <Sep />
          <Tool name="orbit" active />
          {['hand', 'zoom', 'extents'].map((t) => <Tool key={t} name={t} />)}
          <Sep />
          {['warehouse', 'extension', 'layout'].map((t) => <Tool key={t} name={t} />)}
          <Sep />
          <Tool name="ruby" />
        </Group>
        <Group>
          {['houseIso', 'houseTop', 'houseFront', 'houseRight', 'houseBack', 'houseLeft'].map((t) => (
            <Tool key={t} name={t} />
          ))}
        </Group>
        <Group>
          <Tool name="shell" />
          <Sep />
          {['intersect', 'union', 'subtract', 'trim', 'split'].map((t) => <Tool key={t} name={t} />)}
        </Group>
        <Group last>
          <Tool name="shadow" />
          <ShadowSliders />
        </Group>
      </header>

      <div className="relative flex min-h-0 flex-1 border-b-2 border-[#e2e2e2]">
        <Palette />
        <Viewport />
        <Tray />
        <div className="pointer-events-none absolute bottom-0 left-0 h-[71px] w-[68.2%] bg-black/42" />
      </div>

      <StatusBar />
    </div>
  );
}
